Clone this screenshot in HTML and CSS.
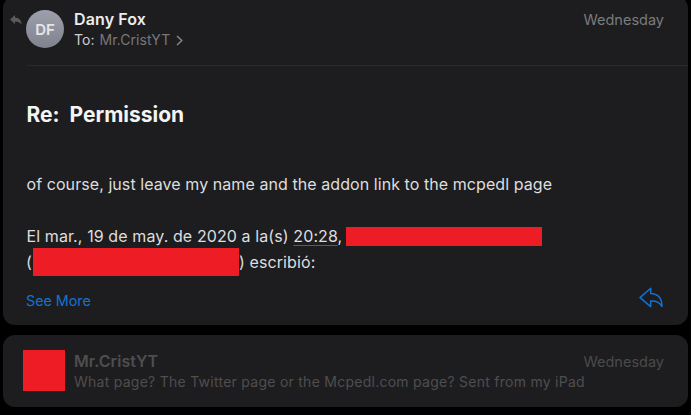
FILE: index.html
```html
<!DOCTYPE html>
<html lang="es">
<head>
<meta charset="utf-8">
<title>Re: Permission</title>
<link rel="stylesheet" href="styles.css">
</head>
<body>
<main class="thread">
  <article class="card message">
    <header class="message-head">
      <svg class="replied" viewBox="0 0 12 10"><path d="M5 0 0 4.600 5 9V6.400c3 0 5 .7 6.600 3.200C11.400 5.500 9 2.800 5 2.600Z"/></svg>
      <div class="avatar">DF</div>
      <div class="who">
        <div class="sender">Dany Fox</div>
        <div class="to"><span class="to-label">To:</span><span class="recipient">Mr.CristYT</span><svg class="chevron" viewBox="0 0 7 11"><path d="M1 1l4.800 4.500L1 10"/></svg></div>
      </div>
      <time class="date">Wednesday</time>
    </header>
    <h1 class="subject">Re:&nbsp; Permission</h1>
    <p class="text">of course, just leave my name and the addon link to the mcpedl page</p>
    <div class="quote">
      <div class="line"><span class="quote-text">El mar., 19 de may. de 2020 a la(s) <span class="time">20:28</span>,</span><span class="redact redact-name"></span></div>
      <div class="line"><span class="paren">(</span><span class="redact redact-mail"></span><span class="wrote">) escribió:</span></div>
    </div>
    <footer class="message-foot">
      <a class="more">See More</a>
      <svg class="reply" viewBox="0 0 25 21"><path d="M11.700 1.200 1 10.600l10.700 9v-5.600c4.600-.4 8.600.8 11.200 5.400C23.400 12 19.500 6.800 11.700 6.500Z"/></svg>
    </footer>
  </article>
  <article class="card preview">
    <span class="redact redact-avatar"></span>
    <div class="preview-body">
      <div class="preview-top"><span class="preview-sender">Mr.CristYT</span><time class="date dim">Wednesday</time></div>
      <div class="snippet">What page? The Twitter page or the Mcpedl.com page? Sent from my iPad</div>
    </div>
  </article>
</main>
</body>
</html>
```
FILE: styles.css
```css
* { box-sizing: border-box; }
body {
  margin: 0;
  height: 415px;
  overflow: hidden;
  background: #000;
  color: #dededf;
  font-family: Inter, "Liberation Sans", sans-serif;
  white-space: nowrap;
}
.thread { display: flex; flex-direction: column; gap: 10px; padding: 0 3px; }
.card { background: #1d1d1f; border-radius: 12px; }
.message { height: 329px; margin-top: -4px; padding-top: 4px; }
.message-head {
  display: flex;
  height: 66px;
  margin-left: 24px;
  border-bottom: 1px solid #29292b;
}
.replied { width: 12px; height: 10px; margin: 15px 4px 0 -17px; fill: #5b5b5e; }
.avatar {
  width: 38px;
  height: 38px;
  margin: 10px 10px 0 0;
  border-radius: 50%;
  background: linear-gradient(#9da0ab, #80838e);
  color: #e6e6e9;
  font-size: 15px;
  font-weight: 600;
  line-height: 39px;
  text-align: center;
}
.who { flex: 1; padding-top: 9px; }
.sender { font-size: 16px; font-weight: 600; line-height: 21px; letter-spacing: 0.12px; color: #ececed; }
.to { display: flex; align-items: center; font-size: 14px; line-height: 20px; letter-spacing: 0.06px; }
.to-label { color: #cfcfd1; margin-right: 5px; }
.recipient { color: #77777a; }
.chevron { width: 7px; height: 11px; margin-left: 6px; fill: none; stroke: #8a8a8d; stroke-width: 1.4; }
.date { margin: 10px 24px 0 0; font-size: 14.5px; line-height: 20px; color: #7b7b7e; }
.subject { margin: 35px 0 0 23.500px; font-size: 21px; font-weight: 700; line-height: 28px; color: #f4f4f5; }
.text { margin: 45px 0 0 23.500px; font-size: 16px; line-height: 20px; letter-spacing: 0.07px; }
.quote { margin: 29px 0 0 23px; font-size: 16px; letter-spacing: 0.1px; }
.line { display: flex; align-items: center; height: 26px; }
.quote-text { width: 320px; padding-left: 0.5px; }
.time { text-decoration: underline; text-decoration-color: #5c5c5f; text-decoration-thickness: 1px; text-underline-offset: 3px; }
.redact { flex: none; background: #ee1c25; }
.redact-name { width: 196px; height: 19px; }
.paren { width: 7px; }
.redact-mail { width: 206px; height: 28px; }
.message-foot { display: flex; justify-content: space-between; align-items: flex-start; margin: 12px 24px 0 23px; }
.more { margin-top: 4px; font-size: 14.3px; line-height: 20px; color: #1272d2; }
.reply { width: 25px; height: 21px; fill: none; stroke: #1272d2; stroke-width: 1.5; stroke-linejoin: round; }
.preview { display: flex; height: 72px; padding: 15px 0 0 20px; }
.redact-avatar { width: 42px; height: 41px; margin-right: 9px; }
.preview-body { flex: 1; color: #4e4e50; }
.preview-top { display: flex; justify-content: space-between; }
.preview-sender { font-size: 16px; font-weight: 600; line-height: 22px; letter-spacing: 0.08px; }
.date.dim { margin-top: 2px; color: #4a4a4c; }
.snippet { font-size: 14px; line-height: 20px; letter-spacing: 0.26px; }
```
